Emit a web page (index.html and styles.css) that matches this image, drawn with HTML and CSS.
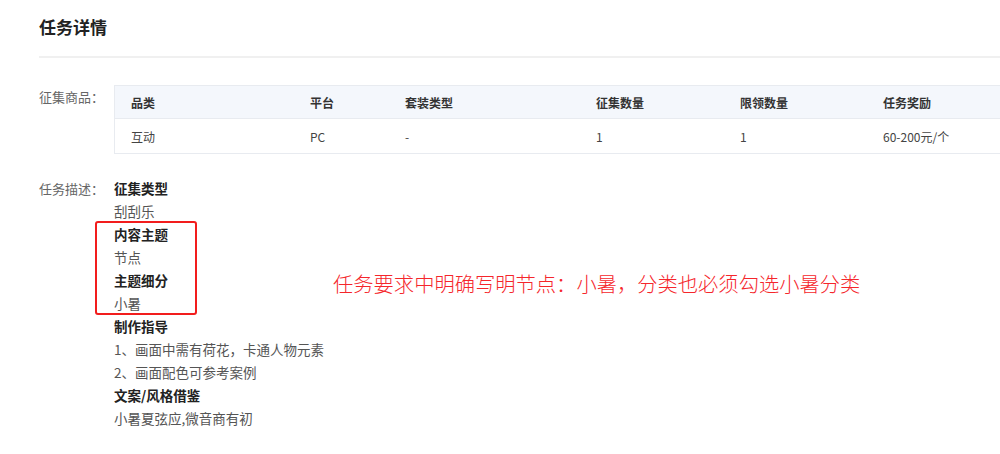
FILE: index.html
```html
<!DOCTYPE html>
<html lang="zh-CN">
<head>
    <meta charset="UTF-8">
    <title>任务详情</title>
    <link rel="stylesheet" href="styles.css">
</head>
<body>
    <div class="page">
        <div class="page-head">
            <h1>任务详情</h1>
        </div>

        <div class="field">
            <div class="field-label">征集商品：</div>
            <div class="field-body">
                <table class="goods">
                    <thead>
                        <tr>
                            <th class="c1">品类</th>
                            <th class="c2">平台</th>
                            <th class="c3">套装类型</th>
                            <th class="c4">征集数量</th>
                            <th class="c5">限领数量</th>
                            <th>任务奖励</th>
                        </tr>
                    </thead>
                    <tbody>
                        <tr>
                            <td>互动</td>
                            <td>PC</td>
                            <td>-</td>
                            <td>1</td>
                            <td>1</td>
                            <td>60-200元/个</td>
                        </tr>
                    </tbody>
                </table>
            </div>
        </div>

        <!-- 任务描述 -->
        <div class="field desc-field">
            <div class="field-label">任务描述：</div>
            <div class="field-body desc">
                <p class="title">征集类型</p>
                <p>刮刮乐</p>
                <p class="title">内容主题</p>
                <p>节点</p>
                <p class="title">主题细分</p>
                <p>小暑</p>
                <p class="title">制作指导</p>
                <p>1、画面中需有荷花，卡通人物元素</p>
                <p>2、画面配色可参考案例</p>
                <p class="title">文案/风格借鉴</p>
                <p>小暑夏弦应,微音商有初</p>
            </div>
            <div class="mark-box"></div>
            <div class="mark-note">任务要求中明确写明节点：小暑，分类也必须勾选小暑分类</div>
        </div>
    </div>
</body>
</html>
```

FILE: styles.css
```css
body {
    margin: 0;
    font-family: "Noto Sans CJK SC", "Microsoft YaHei", sans-serif;
    font-size: 13px;
    color: #333;
    background: #fff;
    overflow: hidden;
}

.page {
    padding-left: 39px;
}

.page-head {
    height: 56px;
    border-bottom: 2px solid #f0f0f0;
}

h1 {
    margin: 0;
    padding-top: 14px;
    font-size: 17px;
    line-height: 26px;
    font-weight: bold;
    color: #222;
}

.field {
    display: flex;
    align-items: flex-start;
}

.page-head + .field {
    margin-top: 27px;
}

.field-label {
    width: 75px;
    flex-shrink: 0;
    color: #666;
    line-height: 18px;
}

.page-head + .field .field-label {
    padding-top: 3px;
}

.field-body {
    flex: 1;
}

.goods {
    width: 900px;
    border-collapse: collapse;
    border: 1px solid #e8ebf0;
    border-right: none;
    table-layout: fixed;
}

.goods th,
.goods td {
    text-align: left;
    padding: 0 16px;
    font-size: 12px;
}

.goods th {
    height: 32px;
    background: #f4f7fc;
    font-weight: bold;
    color: #333;
    border-bottom: 1px solid #e8ebf0;
}

.goods td {
    height: 34px;
    color: #444;
}

.goods .c1 { width: 147px; }
.goods .c2 { width: 63px; }
.goods .c3 { width: 159px; }
.goods .c4 { width: 112px; }
.goods .c5 { width: 111px; }

.desc-field {
    position: relative;
    margin-top: 23px;
}

.desc-field .field-label {
    line-height: 23px;
}

.desc p {
    margin: 0;
    font-size: 13.5px;
    line-height: 23px;
    color: #555;
}

.desc .title {
    font-weight: bold;
    color: #222;
}

.mark-box {
    position: absolute;
    left: 56px;
    top: 44px;
    width: 98px;
    height: 90px;
    border: 2px solid #f21d1d;
    border-radius: 3px;
}

.mark-note {
    position: absolute;
    left: 294px;
    top: 92px;
    font-size: 20.3px;
    line-height: 28px;
    font-weight: 300;
    color: #f5262b;
    white-space: nowrap;
}
```
